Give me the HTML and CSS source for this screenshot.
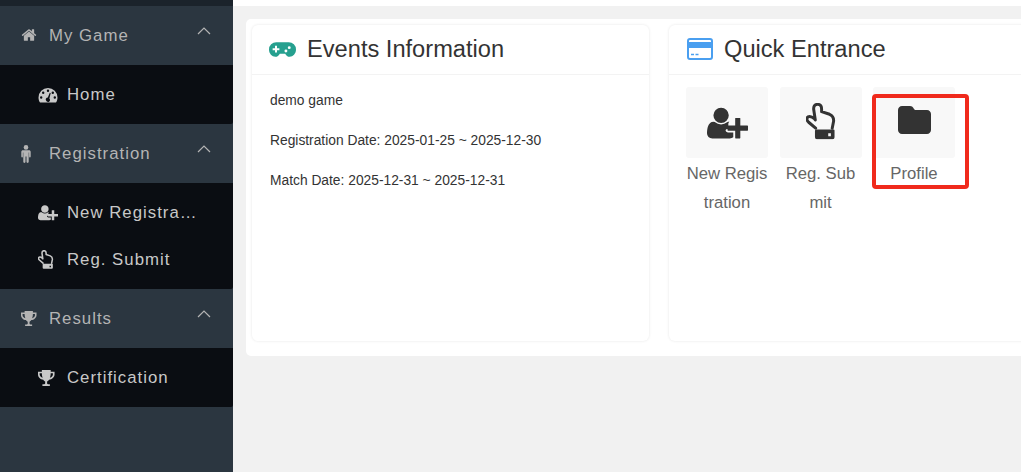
FILE: index.html
```html
<!DOCTYPE html>
<html lang="en">
<head>
<meta charset="utf-8">
<title>My Game</title>
<link rel="stylesheet" href="styles.css">
</head>
<body>
<svg class="defs" width="0" height="0" aria-hidden="true">
  <defs>
    <symbol id="i-trophy" viewBox="1 1 30 29" preserveAspectRatio="xMinYMid meet"><path fill-rule="evenodd" d="M8 1h16v3h7v5c0 5-5 9-10 9.500-1.500 2-2.500 2.500-3.500 3.500v3c0 1.500 1 2 3 2h2v3H9v-3h2c2 0 3-.5 3-2v-3c-1-1-2-1.500-3.500-3.500C5.500 18 1 14 1 9V4h7zM4 7v2c0 2.500 2.500 5 5.500 6C8.500 13 8 10 8 7zM28 7h-4c0 3-.5 6-1.500 8 3-1 5.500-3.500 5.500-6z"/></symbol>
    <symbol id="i-userplus" viewBox="0 0 2048 1792" preserveAspectRatio="xMinYMid meet"><path d="M704 896q-159 0-271.500-112.500T320 512t112.500-271.500T704 128t271.500 112.500T1088 512 975.500 783.500 704 896zm960 128h352q13 0 22.500 9.500t9.500 22.500v192q0 13-9.500 22.500T2016 1280h-352v352q0 13-9.500 22.500T1632 1664h-192q-13 0-22.500-9.500T1408 1632v-352h-352q-13 0-22.500-9.500T1024 1248v-192q0-13 9.500-22.500T1056 1024h352V672q0-13 9.500-22.500T1440 640h192q13 0 22.500 9.500T1664 672v352zm-736 224q0 52 38 90t90 38h256v238q-68 50-171 50H267q-121 0-194-69T0 1408q0-53 3.500-103.500t14-109T44 1082t43-97.500 62-81 85.500-53.500T346 832q19 0 39 17 154 122 319 122t319-122q20-17 39-17 28 0 57 6-28 27-41 50t-13 56v192q0 0 0 0z"/></symbol>
    <symbol id="i-hand" viewBox="33 24 90 110" preserveAspectRatio="xMinYMid meet"><path d="M62 100L41 82Q31 72 39 66Q47 62 59 72L61 75L56 42Q56 28 68 28Q80 28 80 42L80 50L104 58Q118 64 116 80L112 100" fill="none" stroke="currentColor" stroke-width="9" stroke-linejoin="round" stroke-linecap="round"/><path fill-rule="evenodd" d="M64 104h52q3 0 3 3v20q0 6-6 6H66q-6 0-6-6v-19q0-4 4-4zM100 115v9h8v-9z"/></symbol>
  </defs>
</svg>
<div class="app">
  <aside class="sidebar">
    <div class="strip"></div>
    <section class="group">
      <div class="group-head">
        <svg class="ico head-ico home" viewBox="0 0 1792 1792" preserveAspectRatio="xMinYMid meet"><path d="M1472 992v480q0 26-19 45t-45 19h-384v-384H768v384H384q-26 0-45-19t-19-45V992q0-1 .5-3t.5-3l575-474 575 474q1 2 1 6zm223-69l-62 74q-8 9-21 11h-3q-13 0-21-7L896 424 204 1001q-12 8-24 7-13-2-21-11l-62-74q-8-10-7-23.500T101 879l719-599q32-26 76-26t76 26l244 204V289q0-14 9-23t23-9h192q14 0 23 9t9 23v408l219 182q10 8 11 21.500t-7 23.500z"/></svg>
        <span class="head-text">My Game</span>
        <svg class="chev" viewBox="0 0 14 8"><path d="M1 7l6-6 6 6"/></svg>
      </div>
      <ul class="sub">
        <li class="sub-item">
          <svg class="ico sub-ico" viewBox="0 0 20 16" preserveAspectRatio="xMinYMid meet"><path fill-rule="evenodd" d="M10 1a9.500 9.500 0 0 0-9.500 9.500c0 1.800.5 3.400 1.300 4.700.2.300.5.300.8.300h14.800c.3 0 .6 0 .8-.3.800-1.300 1.300-2.900 1.300-4.700A9.500 9.500 0 0 0 10 1zM10 2.600a1.200 1.200 0 1 1 0 2.400 1.200 1.200 0 0 1 0-2.400zM5.200 4.600a1.200 1.200 0 1 1 0 2.400 1.200 1.200 0 0 1 0-2.400zM14.800 4.600a1.200 1.200 0 1 1 0 2.400 1.200 1.200 0 0 1 0-2.400zM3.200 9.300a1.200 1.200 0 1 1 0 2.400 1.200 1.200 0 0 1 0-2.400zM16.800 9.300a1.200 1.200 0 1 1 0 2.400 1.200 1.200 0 0 1 0-2.400zM11.800 5.800l.9.300-1.300 5.400a2 2 0 1 1-3.300 2 2 2 0 0 1 1.700-3.100z"/></svg>
          <span class="sub-text">Home</span>
        </li>
      </ul>
    </section>
    <section class="group">
      <div class="group-head">
        <svg class="ico head-ico male" viewBox="0 0 10 18" preserveAspectRatio="xMinYMid meet"><circle cx="5" cy="2.400" r="2.300"/><path d="M2 5.200h6c1 0 1.700.7 1.700 1.700v4.700c0 .5-.4.900-.8.900s-.8-.4-.8-.9V7.500h-.4v9.300c0 .6-.5 1.100-1.100 1.100s-1.100-.5-1.100-1.100v-5.300h-1v5.300c0 .6-.5 1.100-1.100 1.100s-1.100-.5-1.100-1.100V7.500h-.4v4.100c0 .5-.4.900-.8.900s-.8-.4-.8-.9V6.900c0-1 .7-1.700 1.700-1.700z"/></svg>
        <span class="head-text">Registration</span>
        <svg class="chev" viewBox="0 0 14 8"><path d="M1 7l6-6 6 6"/></svg>
      </div>
      <ul class="sub">
        <li class="sub-item">
          <svg class="ico sub-ico wide"><use href="#i-userplus"/></svg>
          <span class="sub-text">New Registration</span>
        </li>
        <li class="sub-item">
          <svg class="ico sub-ico tall"><use href="#i-hand"/></svg>
          <span class="sub-text">Reg. Submit</span>
        </li>
      </ul>
    </section>
    <section class="group">
      <div class="group-head">
        <svg class="ico head-ico"><use href="#i-trophy"/></svg>
        <span class="head-text">Results</span>
        <svg class="chev" viewBox="0 0 14 8"><path d="M1 7l6-6 6 6"/></svg>
      </div>
      <ul class="sub">
        <li class="sub-item">
          <svg class="ico sub-ico"><use href="#i-trophy"/></svg>
          <span class="sub-text">Certification</span>
        </li>
      </ul>
    </section>
  </aside>
  <main class="main">
    <div class="topbar"></div>
    <div class="panel">
      <article class="card">
        <header class="card-head">
          <svg class="title-ico pad" viewBox="0 0 26 14"><path fill-rule="evenodd" d="M7 0h12a7 7 0 0 1 7 7c0 4-3 7-6 7-2.200 0-3.400-1.300-4.400-3h-5.200c-1 1.700-2.200 3-4.400 3-3 0-6-3-6-7a7 7 0 0 1 7-7zM5.800 3.500v2.300H3.500v1.900h2.300V10h1.900V7.700H10V5.800H7.700V3.500zM19.500 3.800a1.400 1.400 0 1 0 0 2.800 1.400 1.400 0 0 0 0-2.800zM16.300 7a1.400 1.400 0 1 0 0 2.800 1.400 1.400 0 0 0 0-2.800z"/></svg>
          <h2 class="card-title">Events Information</h2>
        </header>
        <div class="card-body info">
          <p>demo game</p>
          <p>Registration Date: 2025-01-25 ~ 2025-12-30</p>
          <p>Match Date: 2025-12-31 ~ 2025-12-31</p>
        </div>
      </article>
      <article class="card">
        <header class="card-head">
          <svg class="title-ico credit" viewBox="0 0 26 22"><rect x="1" y="1" width="24" height="20" rx="2" fill="#fff" stroke="#4a9ff0" stroke-width="2"/><rect x="1" y="4" width="24" height="6" fill="#4a9ff0"/><path d="M4 16.500h3M8.500 16.500h3" stroke="#4a9ff0" stroke-width="1.500"/></svg>
          <h2 class="card-title">Quick Entrance</h2>
        </header>
        <div class="card-body tiles">
          <div class="tile">
            <div class="tile-box"><svg class="tile-ico plus"><use href="#i-userplus"/></svg></div>
            <div class="tile-label">New Registration</div>
          </div>
          <div class="tile">
            <div class="tile-box"><svg class="tile-ico point"><use href="#i-hand"/></svg></div>
            <div class="tile-label">Reg. Submit</div>
          </div>
          <div class="tile">
            <div class="tile-box"><svg class="tile-ico folder" viewBox="0 0 33 28"><path d="M4 0h8c2 0 3 1 4 3l1 1h12c2.200 0 4 1.800 4 4v16c0 2.200-1.800 4-4 4H4c-2.200 0-4-1.800-4-4V4c0-2.200 1.800-4 4-4z"/></svg></div>
            <div class="tile-label">Profile</div>
          </div>
          <div class="marker"></div>
        </div>
      </article>
    </div>
  </main>
</div>
</body>
</html>
```
FILE: styles.css
```css
* { box-sizing: border-box; }
html, body { margin: 0; padding: 0; height: 100%; overflow: hidden; }
body { font-family: "Liberation Sans", Arial, sans-serif; color: #333; }
.defs { position: absolute; }
.app { display: flex; width: 1021px; height: 472px; overflow: hidden; }

.sidebar { flex: 0 0 233px; background: #2b3640; display: flex; flex-direction: column; }
.strip { height: 6px; background: #1b232b; }
.group-head { height: 59px; display: flex; align-items: center; padding-left: 21px; color: #b4b4b4; }
.head-ico { width: 16px; height: 15px; flex: none; margin-right: 12px; }
.head-ico.home { height: 18px; margin-top: -2px; }
.head-ico.male { height: 18px; }
.head-text { font-size: 16.8px; letter-spacing: 1px; }
.chev { width: 14px; height: 8px; margin-left: auto; margin-right: 22px; margin-top: -9px; fill: none; stroke: #b4b4b4; stroke-width: 1.200; }
.ico { fill: currentColor; display: block; }
.sub { list-style: none; margin: 0; padding: 6px 0; background: #0a0d12; border-radius: 0 0 2px 0; }
.sub-item { height: 47px; display: flex; align-items: center; padding-left: 38px; color: #c8c8c8; }
.sub-ico { width: 20px; height: 16px; flex: none; margin-right: 9px; }
.sub-ico.wide { height: 17.500px; }
.sub-ico.tall { height: 19px; }
.sub-text { font-size: 16.8px; letter-spacing: 1px; max-width: 132px; white-space: nowrap; overflow: hidden; text-overflow: ellipsis; }

.main { flex: 1 1 auto; min-width: 0; background: #f1f1f1; }
.topbar { height: 6px; background: #fff; }
.panel { display: flex; gap: 20px; margin: 13px 0 0 13px; padding: 6px 0 15px 6px; width: 1000px; height: 337px; background: #fff; border-radius: 5px; }
.card { flex: 0 0 397px; background: #fff; border-radius: 6px; box-shadow: 0 0 3px rgba(0, 0, 0, .1); }
.card-head { height: 50px; display: flex; align-items: center; padding-left: 17px; border-bottom: 1px solid #f3f3f3; }
.title-ico { display: block; flex: none; margin-right: 11px; }
.title-ico.pad { width: 27px; height: 15px; fill: #26a08f; }
.title-ico.credit { width: 26px; height: 22px; margin: -2px 11px 0 1px; }
.card-title { margin: 0; font-size: 23.65px; font-weight: 400; color: #333; }

.info { padding: 6px 18px; font-size: 13.8px; color: #333; }
.info p { margin: 0; height: 40px; line-height: 40px; }

.tiles { position: relative; display: flex; padding: 12px 0 0 17px; }
.tile { width: 82px; margin-right: 11.5px; }
.tile-box { height: 71px; background: #f8f8f8; border-radius: 3px; display: flex; align-items: center; justify-content: center; }
.tile-ico { display: block; fill: #333; color: #333; }
.tile-ico.plus { width: 41px; height: 36px; }
.tile-ico.point { width: 30px; height: 36.500px; margin-top: -2px; }
.tile-ico.folder { width: 33px; height: 28px; margin-top: -5px; }
.tile-label { margin-top: 1px; font-size: 16.700px; line-height: 29px; color: #666; text-align: center; word-break: break-all; }
.marker { position: absolute; left: 203px; top: 19px; width: 97px; height: 95px; border: 4px solid #f02a1c; border-radius: 4px; }
```
